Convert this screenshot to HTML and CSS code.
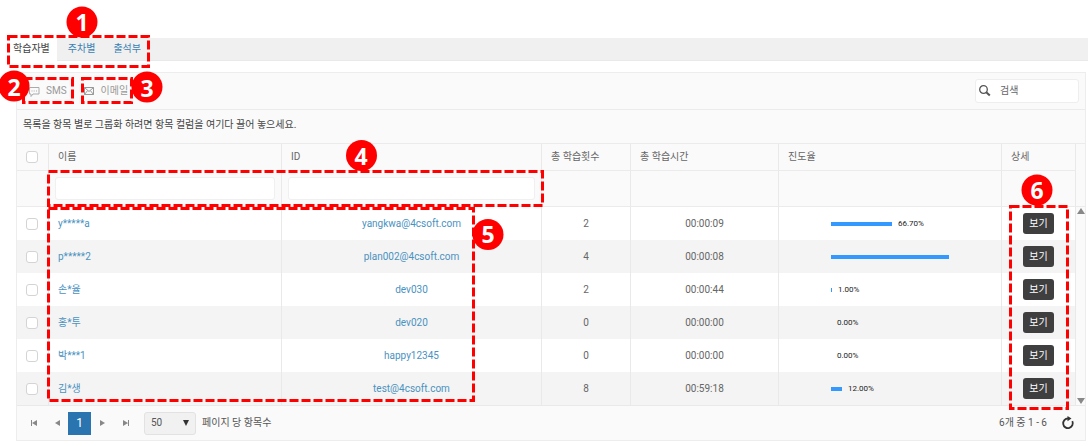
FILE: index.html
```html
<!DOCTYPE html>
<html lang="ko">
<head>
<meta charset="utf-8">
<title>학습자별</title>
<link rel="stylesheet" href="styles.css">
</head>
<body>
<main class="page">
  <nav class="tabs">
    <a class="tab tab-active" href="#learner">학습자별</a>
    <a class="tab" href="#week">주차별</a>
    <a class="tab" href="#attendance">출석부</a>
  </nav>

  <section class="grid">
    <div class="toolbar">
      <button class="tool" type="button">
        <svg width="12" height="12" viewBox="0 0 12 12" fill="none" stroke="#aaa"><path d="M1.500 2.500h9.500v6.500h-6l-2 2.500v-2.500h-1.500z"/><path d="M3.500 6h1M5.700 6h1M8 6h1"/></svg>
        <span>SMS</span>
      </button>
      <button class="tool" type="button">
        <svg width="12" height="12" viewBox="0 0 12 12" fill="none" stroke="#999"><path d="M1.500 2.500h9v7h-9zM1.500 2.500l4.500 4 4.500-4M1.500 9.500l3.200-4M10.500 9.500l-3.200-4"/></svg>
        <span>이메일</span>
      </button>
      <label class="search">
        <svg width="14" height="14" viewBox="0 0 14 14" fill="none" stroke="#555"><circle cx="5.500" cy="5.500" r="3.800" stroke-width="1.300"/><path d="M8.300 8.300l3.500 3.200" stroke-width="2"/></svg>
        <input type="text" placeholder="검색" aria-label="검색">
      </label>
    </div>
    <div class="group-hint">목록을 항목 별로 그룹화 하려면 항목 컬럼을 여기다 끌어 놓으세요.</div>

    <table class="table">
      <colgroup>
        <col class="c-check"><col class="c-name"><col class="c-id"><col class="c-count"><col class="c-time"><col class="c-progress"><col class="c-detail"><col class="c-scroll">
      </colgroup>
      <thead>
        <tr class="head">
          <th class="check"><input type="checkbox" aria-label="전체 선택"></th>
          <th>이름</th><th>ID</th><th>총 학습횟수</th><th>총 학습시간</th><th>진도율</th><th>상세</th>
          <th class="scroll" rowspan="2"></th>
        </tr>
        <tr class="filter">
          <td></td>
          <td><input type="text" aria-label="이름"></td>
          <td><input type="text" aria-label="ID"></td>
          <td></td><td></td><td></td><td></td>
        </tr>
      </thead>
      <tbody>
        <tr>
          <td class="check"><input type="checkbox" aria-label="y*****a"></td>
          <td class="name"><a href="#u1">y*****a</a></td><td><a href="#u1">yangkwa@4csoft.com</a></td><td>2</td><td>00:00:09</td>
          <td><div class="progress"><span class="bar" style="width:61px"></span><span>66.70%</span></div></td>
          <td><button class="view" type="button">보기</button></td>
          <td class="scroll" rowspan="6"><div class="scrollbar">
            <svg width="8" height="6" viewBox="0 0 8 6" fill="#888"><path d="M4 0l4 6h-8z"/></svg>
            <svg width="8" height="6" viewBox="0 0 8 6" fill="#888"><path d="M0 0h8l-4 6z"/></svg>
          </div></td>
        </tr>
        <tr>
          <td class="check"><input type="checkbox" aria-label="p*****2"></td>
          <td class="name"><a href="#u2">p*****2</a></td><td><a href="#u2">plan002@4csoft.com</a></td><td>4</td><td>00:00:08</td>
          <td><div class="progress"><span class="bar" style="width:118px"></span></div></td>
          <td><button class="view" type="button">보기</button></td>
        </tr>
        <tr>
          <td class="check"><input type="checkbox" aria-label="손*율"></td>
          <td class="name"><a href="#u3">손*율</a></td><td><a href="#u3">dev030</a></td><td>2</td><td>00:00:44</td>
          <td><div class="progress"><span class="bar" style="width:1px"></span><span>1.00%</span></div></td>
          <td><button class="view" type="button">보기</button></td>
        </tr>
        <tr>
          <td class="check"><input type="checkbox" aria-label="홍*투"></td>
          <td class="name"><a href="#u4">홍*투</a></td><td><a href="#u4">dev020</a></td><td>0</td><td>00:00:00</td>
          <td><div class="progress"><span class="bar" style="width:0"></span><span>0.00%</span></div></td>
          <td><button class="view" type="button">보기</button></td>
        </tr>
        <tr>
          <td class="check"><input type="checkbox" aria-label="박***1"></td>
          <td class="name"><a href="#u5">박***1</a></td><td><a href="#u5">happy12345</a></td><td>0</td><td>00:00:00</td>
          <td><div class="progress"><span class="bar" style="width:0"></span><span>0.00%</span></div></td>
          <td><button class="view" type="button">보기</button></td>
        </tr>
        <tr>
          <td class="check"><input type="checkbox" aria-label="김*생"></td>
          <td class="name"><a href="#u6">김*생</a></td><td><a href="#u6">test@4csoft.com</a></td><td>8</td><td>00:59:18</td>
          <td><div class="progress"><span class="bar" style="width:11px"></span><span>12.00%</span></div></td>
          <td><button class="view" type="button">보기</button></td>
        </tr>
      </tbody>
    </table>

    <footer class="pager">
      <button class="page-btn" type="button" aria-label="첫 페이지"><svg width="8" height="8" viewBox="0 0 8 8" fill="#888"><path d="M1 1h1v6h-1zM7 1v6l-5-3z"/></svg></button>
      <button class="page-btn" type="button" aria-label="이전"><svg width="8" height="8" viewBox="0 0 8 8" fill="#888"><path d="M7 1v6l-5-3z"/></svg></button>
      <button class="page-btn page-current" type="button">1</button>
      <button class="page-btn" type="button" aria-label="다음"><svg width="8" height="8" viewBox="0 0 8 8" fill="#888"><path d="M1 1v6l5-3z"/></svg></button>
      <button class="page-btn" type="button" aria-label="마지막 페이지"><svg width="8" height="8" viewBox="0 0 8 8" fill="#888"><path d="M6 1h1v6h-1zM1 1v6l5-3z"/></svg></button>
      <label class="size">
        <span class="size-box">
          <select><option>50</option></select>
          <svg class="size-arrow" width="6" height="6" viewBox="0 0 6 6" fill="#333"><path d="M0 0h6l-3 6z"/></svg>
        </span>
        페이지 당 항목수
      </label>
      <span class="total">6개 중 1 - 6</span>
      <button class="refresh" type="button" aria-label="새로 고침"><svg width="14" height="14" viewBox="0 0 14 14"><path d="M11.300 5.200a4.800 4.800 0 1 1-4.300-2.700" fill="none" stroke="#333" stroke-width="1.800"/><path d="M6.500 0l4 2.600-4 2.700z" fill="#333"/></svg></button>
    </footer>
  </section>

  <svg class="callouts" width="1092" height="446" viewBox="0 0 1092 446">
    <g class="frames">
      <rect x="8.500" y="36.500" width="140" height="30"/>
      <rect x="23.500" y="78.500" width="49" height="24"/>
      <rect x="82.500" y="78.500" width="49" height="24"/>
      <rect x="48.500" y="171.500" width="494" height="34"/>
      <rect x="48.500" y="208.500" width="425" height="192"/>
      <rect x="1010.500" y="206.500" width="57" height="202"/>
    </g>
    <g class="badges">
      <circle cx="82" cy="22" r="15.500"/><text x="82" y="31">1</text>
      <circle cx="14" cy="86" r="15.500"/><text x="14" y="96">2</text>
      <circle cx="147" cy="87" r="15.500"/><text x="147" y="97">3</text>
      <circle cx="361.500" cy="155.500" r="15.500"/><text x="361" y="165">4</text>
      <circle cx="488" cy="234.500" r="15.500"/><text x="488" y="243">5</text>
      <circle cx="1037" cy="190" r="15.500"/><text x="1037" y="199">6</text>
    </g>
  </svg>
</main>
</body>
</html>
```

FILE: styles.css
```css
* { box-sizing: border-box; }
body {
  margin: 0;
  background: #fff;
  color: #555;
  font: 10px/16px Roboto, "Noto Sans CJK KR", sans-serif;
}
button, input, select { font: inherit; color: inherit; }
button { padding: 0; border: 0; background: none; }
a { color: #4a92bf; text-decoration: none; }
svg { display: block; flex: none; }

.page { position: relative; padding: 38px 4px 4px; }
.tabs { display: flex; height: 23px; background: #f0f0f0; border-bottom: 1px solid #e9e9e9; }
.tab { padding: 3px 7px 3px 11px; color: #3b80b3; }
.tab-active { padding-left: 9px; background: #fff; color: #444; margin-bottom: -1px; }

.grid { margin: 11px 2px 0 12px; border: 1px solid #ededed; background: #fafafa; }
.toolbar { display: flex; align-items: center; height: 37px; padding: 0 6px 0 11px; border-bottom: 1px solid #ebebeb; }
.tool { display: flex; align-items: center; gap: 6px; height: 24px; margin-right: 16px; color: #999; }
.search {
  display: flex; align-items: center; gap: 8px;
  width: 104px; height: 24px; margin-left: auto; padding-left: 2px;
  background: #fff; border: 1px solid #eee; border-radius: 3px;
}
.search input { width: 100%; min-width: 0; padding: 0; border: 0; background: none; outline: 0; }
.search input::placeholder { color: #666; opacity: 1; }
.group-hint { height: 33px; padding: 7px 6px; color: #444; }

.table { width: 100%; table-layout: fixed; border-collapse: separate; border-spacing: 0; color: #666; }
.c-check { width: 32px; }
.c-name { width: 233px; }
.c-id { width: 260px; }
.c-count { width: 89px; }
.c-time { width: 148px; }
.c-progress { width: 223px; }
.c-detail { width: 74px; }
.c-scroll { width: 9px; }
.table th, .table td { padding: 0; border-right: 1px solid #e9e9e9; }
.table .scroll { border-right: 0; background: #fafafa; }
.head th { height: 27px; padding-left: 9px; border-top: 1px solid #ebebeb; text-align: left; font-weight: 400; }
.table .check { padding: 0 1px 0 0; }
.table .filter td { height: 36px; border-top: 1px solid #ebebeb; padding: 0 6px; }
.filter input { display: block; width: 100%; height: 23px; border: 1px solid #f0f0f0; border-radius: 3px; background: #fff; }
.check input {
  appearance: none; display: block; width: 12px; height: 12px; margin: 0 auto;
  border: 1px solid #d4d4d4; border-radius: 3px; background: #fff;
}
tbody td { height: 33px; background: #fff; text-align: center; }
tbody tr:first-child td { height: 34px; border-top: 1px solid #ebebeb; }
tbody tr:nth-child(even) td { background: #f4f4f4; }
.table .name { padding-left: 9px; text-align: left; }
.progress { display: flex; align-items: center; gap: 6px; padding-left: 52px; color: #222; font-size: 8px; }
.bar { height: 4px; background: #3399ff; }
.view { width: 31px; height: 21px; border-radius: 3px; background: #3f3f3f; color: #fff; }
.scrollbar { display: flex; flex-direction: column; align-items: center; justify-content: space-between; height: 196px; }

.pager { display: flex; align-items: center; height: 35px; padding: 0 10px 0 5px; border-top: 1px solid #e9e9e9; }
.page-btn { display: grid; place-items: center; width: 23px; height: 23px; font-size: 12px; }
.page-current { background: #2a75b0; color: #fff; }
.size { display: flex; align-items: center; gap: 6px; margin-left: 7px; }
.size-box { display: flex; align-items: center; position: relative; }
.size select {
  appearance: none; width: 52px; height: 23px; padding: 0 6px;
  border: 1px solid #e2e2e2; border-radius: 3px; background: #f1f1f1;
}
.size-arrow { position: absolute; right: 7px; pointer-events: none; }
.total { margin-left: auto; margin-right: 14px; }

.callouts { position: absolute; left: 0; top: 0; pointer-events: none; }
.frames { fill: none; stroke: #f00; stroke-width: 3; stroke-dasharray: 9 3; }
.badges { fill: #f00; }
.badges text { fill: #fff; font: 700 23px "Noto Sans", sans-serif; text-anchor: middle; }
```
